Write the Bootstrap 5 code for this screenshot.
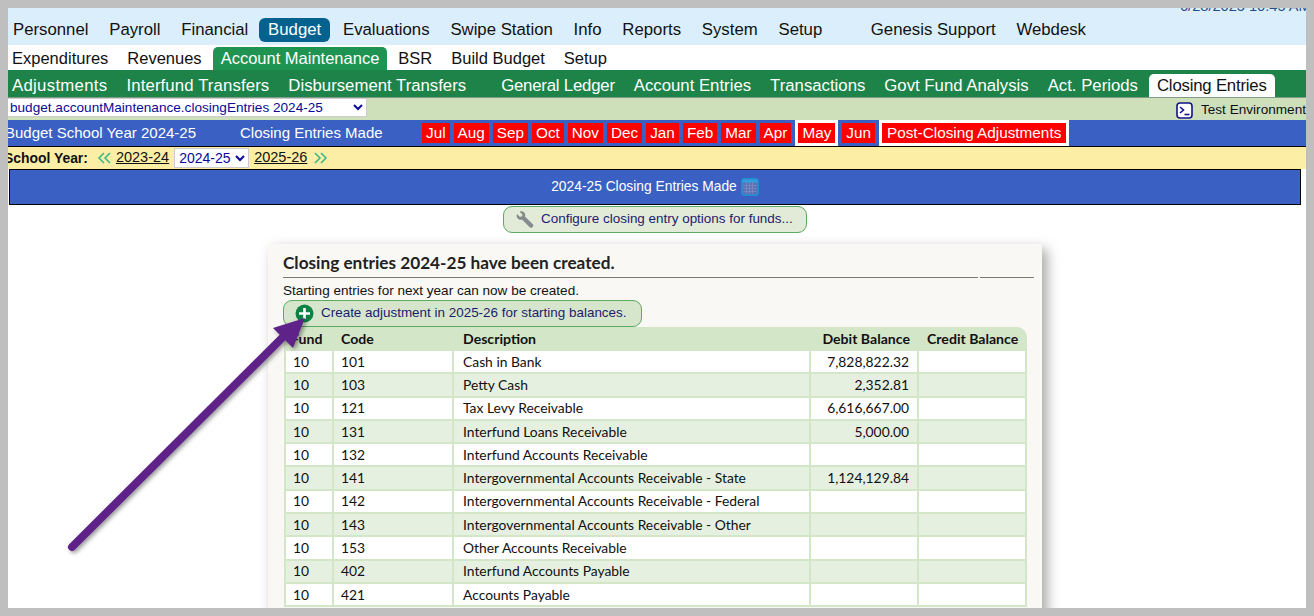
<!DOCTYPE html>
<html lang="en"><head><meta charset="utf-8"><title>Closing Entries</title>
<link href="https://cdn.jsdelivr.net/npm/bootstrap@5.3.0/dist/css/bootstrap.min.css" rel="stylesheet">
<style>
html,body{height:616px;overflow:hidden;background:#bfbfbf;margin:0}
body{padding:8px 8px 8px 8px;font-family:"Liberation Sans",Arial,sans-serif;color:#111}
.frame{position:relative;width:1298px;height:600px;background:#fff;overflow:hidden}
.stamp{position:absolute;left:1172px;top:-10px;font-size:14.6px;color:#1f4e8c;line-height:16px;white-space:nowrap}
.bar a{color:inherit;text-decoration:none;white-space:nowrap;padding:0 8px}
.bar{font-size:16.5px;white-space:nowrap}
.bar1{height:37px;background:#dbeefb;gap:4.8px;margin-left:0;padding:10px 0 3px 0;color:#111;font-size:16.75px}
.bar1 a:first-child{margin-left:-3px}
.bar1 a{line-height:24px;border-radius:6px}
.bar1 .on{background:#05628f;color:#fff;padding:0 9px;margin-left:-2px}
.bar2{height:25px;gap:3px;padding-top:2px;background:#fff}
.bar2 a:first-child{margin-left:-4px}
.bar2 a{line-height:23px;border-radius:5px 5px 0 0}
.bar2 .on{background:#1f9452;color:#fff}
.bar3{height:28px;gap:3px;padding-top:4px;background:#1d8348;color:#fff;border-bottom:1px solid #7f9a86;font-size:16.75px}
.bar3 a:first-child{margin-left:-4px}
.bar3 a{line-height:23px;border-radius:5px 5px 0 0}
.bar3 .on{background:#fff;color:#111}
.bar3 .wide1{letter-spacing:.3px}
.bar3 .wide2{letter-spacing:.12px}
.bar3 .tight{letter-spacing:-.2px}
.gap1{width:23px}.gap2{width:13px}
.envbar{height:22px;background:#cde0ba;font-size:13.6px}
.envbar select{width:362px;margin-left:-3px;height:19px;font-size:13.6px;color:#0a0a96;background:#fff;border:1px solid #ccc;padding:0;font-family:"Liberation Sans",sans-serif}
.envinfo{font-size:13.6px;padding-top:2px;margin-right:0;white-space:nowrap}
.monthbar{height:27px;background:#3b60c4;color:#fff;border-bottom:1px solid #000;font-size:15px;white-space:nowrap;line-height:25px}
.monthbar .ttl1{margin-left:-3px;width:235px}
.monthbar .ttl2{width:182px}
.months{gap:4px;height:26px;font-size:15.3px}
.mo{background:#f00;color:#fff;text-decoration:none;height:20px;line-height:20px;margin:3px 0;padding:0 4px;display:block}
.mosel{background:#fff;padding:0 3px;height:26px}
.mosel .long{padding:0 5px}
.yearbar{height:22px;background:#fdeea5;font-size:14.5px;white-space:nowrap;gap:4px}
.yearbar b{margin-left:-4px;margin-right:5px;font-size:13.9px}
.yearbar a{color:#111}
.yearbar select{font-size:14px;height:20px;width:75px;margin:0 1px;color:#0a0a96;background:#fff;border:1px solid #ccc;padding:0;font-family:"Liberation Sans",sans-serif}
.yearbar .nextyr{margin-left:2px}
.titlebar{margin-left:1px;width:1292px;height:36px;background:#3b60c4;color:#fff;border:1px solid #000;font-size:13.8px}
.titlebar span{padding-top:1px}
.pillbtn{border:1px solid #5cab62;border-radius:9px;background:#e2ead8;color:#1c1c6e;text-decoration:none;height:27px;font-size:13.45px;white-space:nowrap;padding-bottom:1px}
.cfg{width:304px;margin:1px 0 0 495px;gap:7px;padding-left:11px}
.sheet{width:774px;margin:11px 0 0 260px;background:#f9f8f4;box-shadow:5px 5px 12px rgba(0,0,0,.35);padding:0 0 0 15px;height:400px}
.sheet h1{font-family:Lato,sans-serif;font-weight:700;font-size:17.2px;margin:0;padding-top:9px;height:33px;line-height:19px;color:#222}
.rule{gap:2px;height:1px}
.rule i{display:block;height:1px;background:#7d7a72;flex:none}
.rule i:first-child{width:695px}.rule i:last-child{width:54px}
.note{font-size:13.55px;line-height:16px;padding-top:5px;height:22px}
.addbtn{width:359px;background:#d6e6cc;gap:7px;padding-left:11px}
.grid{width:743px;margin:0 0 0 1px;border-collapse:separate;border-spacing:0;font-family:Lato,sans-serif;font-size:13.85px;table-layout:fixed;color:#111}
.grid th{background:#d4e6c8;height:24px;padding:0 0 0 7px;font-weight:700;font-size:14.1px}
.grid th:first-child{border-top-left-radius:10px}
.grid th:nth-child(3){padding-left:9px}
.grid th:nth-child(4){padding:0 9px 0 0;text-align:right}
.grid th:last-child{border-top-right-radius:10px;padding-left:8px}
.grid td{height:23.3px;padding:0 8px 0 7px;border-right:2px solid #d4e6c8;border-bottom:2px solid #d4e6c8;background:#fff;line-height:18px}
.grid td:first-child{border-left:2px solid #d4e6c8}
.grid td:nth-child(3){padding-left:9px}
.grid tbody tr:nth-child(even) td{background:#e6f0e0}
.grid .num{text-align:right}
.arrow{position:absolute;left:0;top:0;pointer-events:none;overflow:visible}
</style></head>
<body>
<div class="frame">
<div class="stamp">6/28/2025 10:45 AM</div>
<nav class="bar bar1 d-flex align-items-center">
<a href="#">Personnel</a><a href="#">Payroll</a><a href="#">Financial</a><a href="#" class="on">Budget</a><a href="#">Evaluations</a><a href="#">Swipe Station</a><a href="#">Info</a><a href="#">Reports</a><a href="#">System</a><a href="#">Setup</a><span class="gap1"></span><a href="#">Genesis Support</a><a href="#">Webdesk</a>
</nav>
<nav class="bar bar2 d-flex">
<a href="#">Expenditures</a><a href="#">Revenues</a><a href="#" class="on">Account Maintenance</a><a href="#">BSR</a><a href="#">Build Budget</a><a href="#">Setup</a>
</nav>
<nav class="bar bar3 d-flex">
<a href="#" class="wide1">Adjustments</a><a href="#" class="wide2">Interfund Transfers</a><a href="#">Disbursement Transfers</a><span class="gap2"></span><a href="#" class="tight">General Ledger</a><a href="#">Account Entries</a><a href="#">Transactions</a><a href="#">Govt Fund Analysis</a><a href="#">Act. Periods</a><a href="#" class="on tight">Closing Entries</a>
</nav>
<div class="envbar d-flex justify-content-between">
<select><option>budget.accountMaintenance.closingEntries 2024-25</option></select>
<div class="envinfo d-flex align-items-center gap-2">
<svg width="17" height="17" viewBox="0 0 17 17"><rect x="1" y="1" width="15" height="15" rx="3" fill="#fff" stroke="#12128c" stroke-width="1.6"/><path d="M4 5l3.5 3L4 11" fill="none" stroke="#12128c" stroke-width="1.6"/><path d="M8.5 12.5h5" stroke="#12128c" stroke-width="1.6"/></svg>
<span>Test Environment</span></div>
</div>
<div class="monthbar d-flex">
<span class="ttl1">Budget School Year 2024-25</span>
<span class="ttl2">Closing Entries Made</span>
<div class="months d-flex">
<a class="mo" href="#">Jul</a><a class="mo" href="#">Aug</a><a class="mo" href="#">Sep</a><a class="mo" href="#">Oct</a><a class="mo" href="#">Nov</a><a class="mo" href="#">Dec</a><a class="mo" href="#">Jan</a><a class="mo" href="#">Feb</a><a class="mo" href="#">Mar</a><a class="mo" href="#">Apr</a>
<div class="mosel"><a class="mo" href="#">May</a></div>
<a class="mo" href="#">Jun</a>
<div class="mosel"><a class="mo long" href="#">Post-Closing Adjustments</a></div>
</div>
</div>
<div class="yearbar d-flex align-items-center">
<b>School Year:</b>
<svg width="15" height="12" viewBox="0 0 15 12"><path d="M7 1L2 6l5 5M13 1L8 6l5 5" fill="none" stroke="#37b58a" stroke-width="1.5"/></svg>
<a href="#">2023-24</a>
<select><option>2024-25</option></select>
<a href="#">2025-26</a>
<svg class="nextyr" width="15" height="12" viewBox="0 0 15 12"><path d="M2 1l5 5-5 5M8 1l5 5-5 5" fill="none" stroke="#37b58a" stroke-width="1.5"/></svg>
</div>
<div class="titlebar d-flex align-items-center justify-content-center gap-1">
<span>2024-25 Closing Entries Made</span>
<svg width="18" height="18" viewBox="0 0 18 18"><rect x=".75" y=".75" width="16.5" height="16.5" rx="3" fill="#5a72b8" stroke="#1f8fd0" stroke-width="1.5"/><rect x="1.5" y="1.5" width="15" height="3" fill="#2f9fe0"/><path d="M2.5 7.5h13M2.5 10.5h13M2.5 13.5h13M5.5 4.5v11M8.5 4.5v11M11.5 4.5v11" stroke="#7f8cc0" stroke-width=".7"/></svg>
</div>
<a href="#" class="pillbtn cfg d-flex align-items-center">
<svg width="19" height="19" viewBox="0 0 19 19"><path d="M2 4.5L5 7.2 7.2 6.6 7.8 4.5 5 1.8C7.4.9 10 2.4 10 5c0 .6-.1 1.1-.3 1.5L17.3 14c.9.9.9 2.1.1 2.9-.8.8-2 .8-2.9-.1L7 9.3C4.2 10.3 1.4 8 2 4.5z" fill="#868c8e" stroke="#6f7476" stroke-width=".4"/></svg>
<span>Configure closing entry options for funds...</span></a>
<div class="sheet">
<h1>Closing entries 2024-25 have been created.</h1>
<div class="rule d-flex"><i></i><i></i></div>
<div class="note">Starting entries for next year can now be created.</div>
<a href="#" class="pillbtn addbtn d-flex align-items-center">
<svg width="19" height="19" viewBox="0 0 19 19"><circle cx="9.5" cy="9.5" r="9" fill="#0a8344"/><path d="M9.5 4v11M4 9.5h11" stroke="#fff" stroke-width="2.6"/></svg>
<span>Create adjustment in 2025-26 for starting balances.</span></a>
<table class="grid">
<colgroup><col style="width:50px"><col style="width:120px"><col style="width:357px"><col style="width:108px"><col style="width:108px"></colgroup>
<thead><tr><th>Fund</th><th>Code</th><th>Description</th><th>Debit Balance</th><th>Credit Balance</th></tr></thead>
<tbody>
<tr><td>10</td><td>101</td><td>Cash in Bank</td><td class="num">7,828,822.32</td><td></td></tr>
<tr><td>10</td><td>103</td><td>Petty Cash</td><td class="num">2,352.81</td><td></td></tr>
<tr><td>10</td><td>121</td><td>Tax Levy Receivable</td><td class="num">6,616,667.00</td><td></td></tr>
<tr><td>10</td><td>131</td><td>Interfund Loans Receivable</td><td class="num">5,000.00</td><td></td></tr>
<tr><td>10</td><td>132</td><td>Interfund Accounts Receivable</td><td class="num"></td><td></td></tr>
<tr><td>10</td><td>141</td><td>Intergovernmental Accounts Receivable - State</td><td class="num">1,124,129.84</td><td></td></tr>
<tr><td>10</td><td>142</td><td>Intergovernmental Accounts Receivable - Federal</td><td class="num"></td><td></td></tr>
<tr><td>10</td><td>143</td><td>Intergovernmental Accounts Receivable - Other</td><td class="num"></td><td></td></tr>
<tr><td>10</td><td>153</td><td>Other Accounts Receivable</td><td class="num"></td><td></td></tr>
<tr><td>10</td><td>402</td><td>Interfund Accounts Payable</td><td class="num"></td><td></td></tr>
<tr><td>10</td><td>421</td><td>Accounts Payable</td><td class="num"></td><td></td></tr>
</tbody></table>
</div>
<svg class="arrow" width="1298" height="600" viewBox="0 0 1298 600">
<defs><filter id="sh" x="-10%" y="-10%" width="125%" height="125%"><feDropShadow dx="2" dy="2" stdDeviation="2" flood-color="#000" flood-opacity=".4"/></filter></defs>
<g filter="url(#sh)"><path d="M64 539L278 326" stroke="#5f2488" stroke-width="8" stroke-linecap="round"/><path d="M297 310L265 320 285 340z" fill="#5f2488"/></g>
</svg>
</div>
<script src="https://cdn.jsdelivr.net/npm/bootstrap@5.3.0/dist/js/bootstrap.bundle.min.js"></script>
</body></html>
